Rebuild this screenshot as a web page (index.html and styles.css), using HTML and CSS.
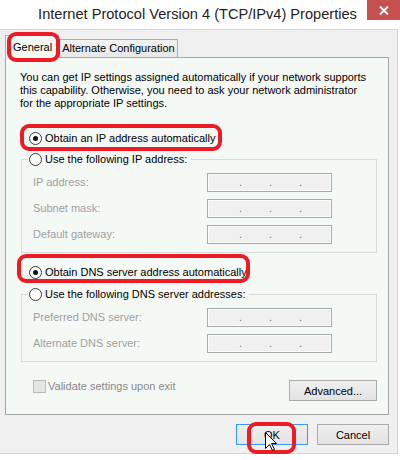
FILE: index.html
```html
<!DOCTYPE html>
<html>
  <head>
    <meta charset="utf-8">
    <link rel="stylesheet" href="styles.css">
  </head>
  <body>
    <div class="titlebar">
      <span class="title">Internet Protocol Version 4 (TCP/IPv4) Properties</span>
      <span class="close">
        <svg width="10" height="9" viewBox="0 0 10 9"><path d="M1 0.5 9 8.5 M9 0.5 1 8.5" stroke="#fff" stroke-width="2"/></svg>
      </span>
    </div>

    <div class="client">
      <div class="tabs">
        <div class="tab active">General</div>
        <div class="tab">Alternate Configuration</div>
      </div>

      <div class="panel">
        <p class="intro">You can get IP settings assigned automatically if your network supports<br>this capability. Otherwise, you need to ask your network administrator<br>for the appropriate IP settings.</p>

        <label class="option auto-ip"><span class="radio on"></span>Obtain an IP address automatically</label>
        <fieldset class="group">
          <legend><label class="option"><span class="radio"></span>Use the following IP address:</label></legend>
          <div class="field"><span>IP address:</span><span class="ip"><span>.</span><span>.</span><span>.</span></span></div>
          <div class="field"><span>Subnet mask:</span><span class="ip"><span>.</span><span>.</span><span>.</span></span></div>
          <div class="field"><span>Default gateway:</span><span class="ip"><span>.</span><span>.</span><span>.</span></span></div>
        </fieldset>

        <label class="option auto-dns"><span class="radio on"></span>Obtain DNS server address automatically</label>
        <fieldset class="group dns">
          <legend><label class="option"><span class="radio"></span>Use the following DNS server addresses:</label></legend>
          <div class="field"><span>Preferred DNS server:</span><span class="ip"><span>.</span><span>.</span><span>.</span></span></div>
          <div class="field"><span>Alternate DNS server:</span><span class="ip"><span>.</span><span>.</span><span>.</span></span></div>
        </fieldset>

        <div class="footer">
          <label class="check"><span class="box"></span>Validate settings upon exit</label>
          <button class="btn advanced">Advanced...</button>
        </div>
      </div>

      <div class="actions">
        <button class="btn ok">OK
          <svg class="cursor" width="12" height="19" viewBox="0 0 12 19"><path d="M0.5 0.5 V16.5 L4.5 12.5 L7.5 18.5 L9.5 17.5 L6.5 11.5 H11.5 Z" fill="#fff" stroke="#000"/></svg>
        </button>
        <button class="btn">Cancel</button>
      </div>
    </div>
  </body>
</html>
```

FILE: styles.css
```css
/* janela de propriedades do IPv4 */
body {
  margin: 0;
  width: 400px;
  height: 460px;
  overflow: hidden;
  background: #fff;
  font-family: "Liberation Sans", Arial, sans-serif;
  font-size: 11px;
  line-height: 13px;
  color: #000;
}

.titlebar {
  display: grid;
  grid-template-columns: 34px 1fr 33px;
  height: 29px;
  background: #fff;
}

.title {
  grid-column: 2;
  text-align: center;
  padding-right: 6px;
  font-size: 14.6px;
  line-height: 29px;
  color: #222;
  white-space: nowrap;
}

.close {
  grid-column: 3;
  height: 20px;
  background: #c75050;
  display: flex;
  align-items: center;
  justify-content: center;
}

.client {
  width: 398px;
  box-sizing: border-box;
  border: 1px solid #d6d6d6;
  border-left: none;
  background: #f0f0f0;
  padding: 5px 8px 8px 5px;
}

/* abas */
.tabs {
  display: flex;
  align-items: flex-end;
  height: 22px;
}

.tab {
  height: 18px;
  box-sizing: border-box;
  border: 1px solid #acacac;
  border-bottom: none;
  padding: 0 2px;
  line-height: 17px;
  background: linear-gradient(#f3f3f3, #e8e8e8);
  white-space: nowrap;
}

.tab.active {
  height: 23px;
  margin-bottom: -1px;
  padding: 0 6px 0 7px;
  line-height: 22px;
  background: #f5f9f6;
  position: relative;
  z-index: 1;
}

/* marcas vermelhas por cima */
.tab.active::after,
.auto-ip::after,
.auto-dns::after,
.ok::after {
  content: "";
  position: absolute;
  box-sizing: border-box;
  border: 4px solid #ed1c24;
  border-radius: 9px;
}

.tab.active::after {
  left: 1px;
  top: -4px;
  right: -2px;
  bottom: -4px;
}

.panel {
  border: 1px solid #a6a6a6;
  background: #f5f9f6;
  padding: 13px 11px 13px 14px;
}

.intro {
  margin: 0;
}

.option {
  display: flex;
  align-items: center;
  gap: 3px;
  width: fit-content;
  line-height: 14px;
  position: relative;
  white-space: nowrap;
}

.auto-ip {
  margin: 21px 0 0 9px;
}

.auto-ip::after {
  left: -9px;
  top: -7px;
  width: 202px;
  height: 27px;
}

.auto-dns {
  margin: 12px 0 0 9px;
}

.auto-dns::after {
  left: -12px;
  top: -11px;
  width: 233px;
  height: 29px;
}

.radio {
  flex: none;
  width: 13px;
  height: 13px;
  box-sizing: border-box;
  border: 1px solid #3a3a3a;
  border-radius: 50%;
  background: #fff;
  display: flex;
  align-items: center;
  justify-content: center;
}

.radio.on::after {
  content: "";
  width: 5px;
  height: 5px;
  border-radius: 50%;
  background: #111;
}

.group {
  margin: 7px 0 0 1px;
  padding: 7px 0 8px;
  border: 1px solid #d7dcd9;
  min-width: 0;
}

.group.dns {
  margin-top: 8px;
}

.group legend {
  margin-left: 6px;
  padding: 0 3px 0 1px;
}

.field {
  display: grid;
  grid-template-columns: 174px 125px;
  align-items: center;
  height: 19px;
  padding-left: 11px;
  color: #9f9f9f;
}

.field + .field {
  margin-top: 7px;
}

.ip {
  display: flex;
  height: 19px;
  box-sizing: border-box;
  border: 1px solid #a9acae;
  box-shadow: inset 0 0 0 1px #fbfbfb;
  background: #f0f0f0;
  padding-left: 4px;
  line-height: 17px;
  color: #707070;
}

.ip span {
  width: 30px;
  text-align: right;
}

.footer {
  display: flex;
  justify-content: space-between;
  align-items: flex-start;
  margin-top: 17px;
  padding-left: 13px;
}

.check {
  display: flex;
  align-items: center;
  gap: 2px;
  line-height: 14px;
  color: #888;
}

.box {
  width: 13px;
  height: 13px;
  box-sizing: border-box;
  border: 1px solid #b8bcb9;
  background: #e3e6e4;
}

/* botoes */
.btn {
  width: 72px;
  height: 21px;
  padding: 0;
  border: 1px solid #acacac;
  background: linear-gradient(#efefef, #e3e3e3);
  font-family: inherit;
  font-size: 11px;
  color: #000;
}

.advanced {
  width: 88px;
  margin-top: 1px;
}

.actions {
  display: flex;
  justify-content: flex-end;
  gap: 9px;
  margin-top: 9px;
}

.ok {
  position: relative;
  border-color: #3399ff;
}

.ok::after {
  left: 10px;
  top: -3px;
  width: 49px;
  height: 32px;
}

.cursor {
  position: absolute;
  left: 28px;
  top: 7px;
  z-index: 1;
}
```
